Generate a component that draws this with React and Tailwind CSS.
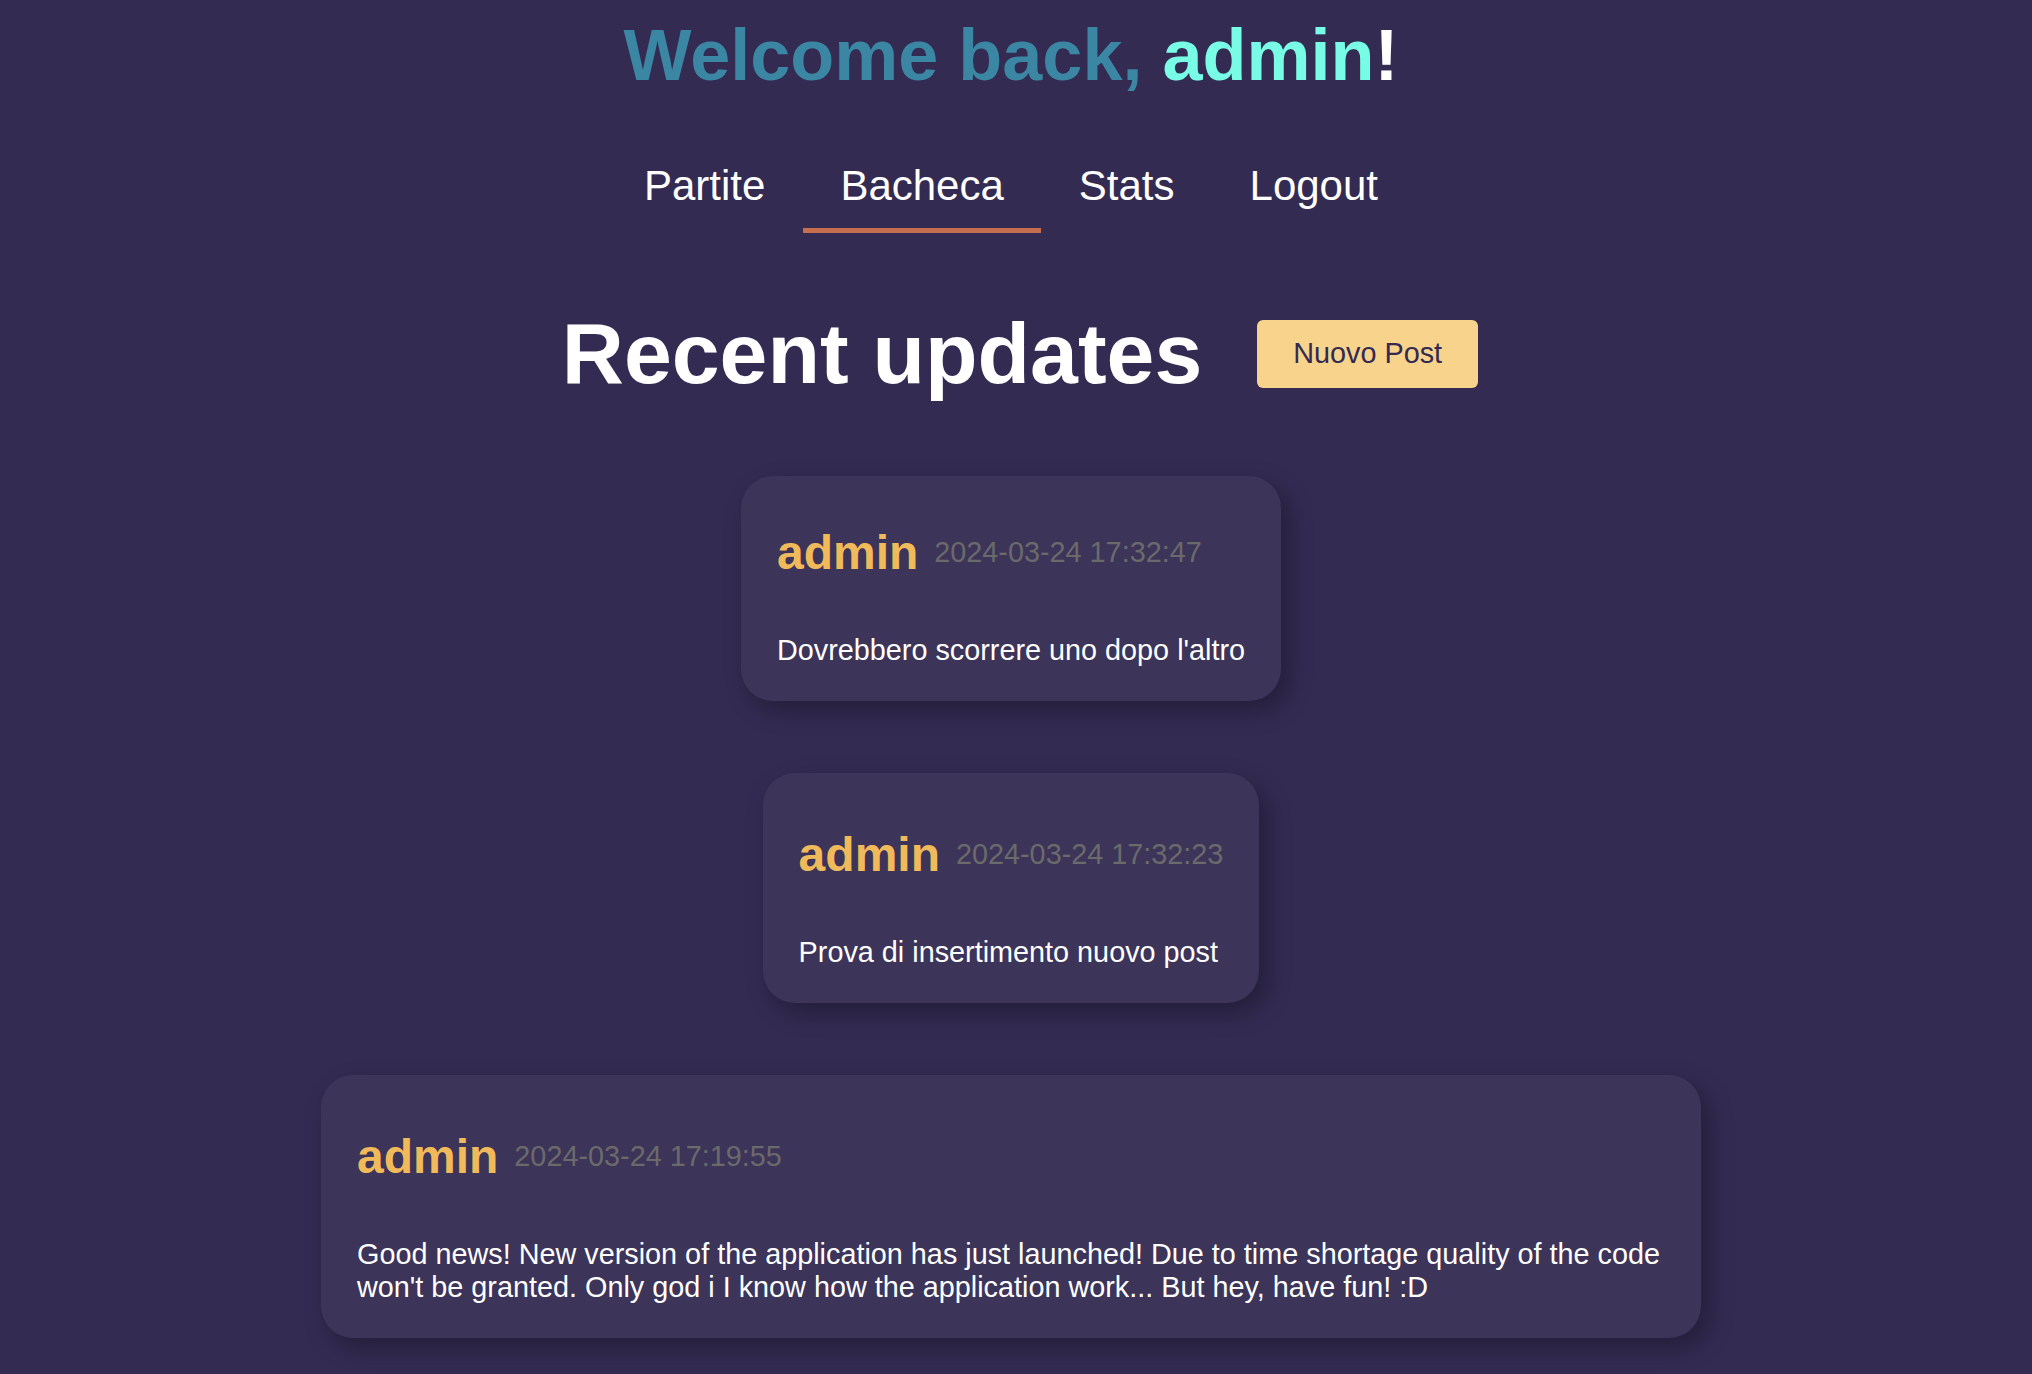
const posts = [
  {
    id: 3,
    author: 'admin',
    date: '2024-03-24 17:32:47',
    text: "Dovrebbero scorrere uno dopo l'altro",
  },
  {
    id: 2,
    author: 'admin',
    date: '2024-03-24 17:32:23',
    text: 'Prova di insertimento nuovo post',
  },
  {
    id: 1,
    author: 'admin',
    date: '2024-03-24 17:19:55',
    text: "Good news! New version of the application has just launched! Due to time shortage quality of the code won't be granted. Only god i I know how the application work... But hey, have fun! :D",
  },
];

const links = ['Partite', 'Bacheca', 'Stats', 'Logout'];

const PostCard = ({ post, first }) => (
  <div className="w-fit max-w-[1380px] rounded-[32px] bg-[#3c3459] px-[36px] pt-[36px] pb-[34px] shadow-[8px_10px_24px_rgba(0,0,0,0.3)]">
    <div className={`${first ? 'mt-[13px]' : 'mt-[18px]'} flex items-center`}>
      <span className="text-[48px] font-bold leading-[normal] text-[#f0b95a]">{post.author}</span>
      <span className="ml-[16px] text-[28.8px] leading-[normal] text-[#6b6a6b]">{post.date}</span>
    </div>
    <p className="mt-[54px] text-[28.8px] leading-[normal] text-white">{post.text}</p>
  </div>
);

export default function App() {
  return (
    <div
      className="min-h-screen bg-[#332b52] pr-[10px] pb-[60px]"
      style={{ fontFamily: '"Liberation Sans", Arial, Helvetica, sans-serif' }}
    >
      {/* Header */}
      <h1 className="pt-[14px] text-center text-[72px] font-bold leading-[normal] text-[#3b86a3]">
        Welcome back, <span className="text-[#78fce6]">admin</span>
        <span className="text-white">!</span>
      </h1>

      <nav className="mt-[66px] flex justify-center">
        {links.map((l) => (
          <a
            key={l}
            href="#"
            className={`border-b-[5px] px-[37.5px] pb-[18px] text-[42px] leading-[normal] text-white ${
              l === 'Bacheca' ? 'border-[#c76e4f]' : 'border-transparent'
            }`}
          >
            {l}
          </a>
        ))}
      </nav>

      {/* Title row */}
      <div className="mt-[71px] flex items-center justify-center pl-[18px]">
        <h2 className="text-[86px] font-bold leading-[normal] text-white">Recent updates</h2>
        <button className="ml-[55px] flex h-[68px] items-center rounded-[6px] bg-[#f8d38c] px-[36px] text-[28.8px] leading-[normal] text-[#322a52]">
          Nuovo Post
        </button>
      </div>

      {/* Posts */}
      <div className="mt-[73px] flex flex-col items-center gap-[72px]">
        {posts.map((p, i) => (
          <PostCard key={p.id} post={p} first={i === 0} />
        ))}
      </div>
    </div>
  );
}
